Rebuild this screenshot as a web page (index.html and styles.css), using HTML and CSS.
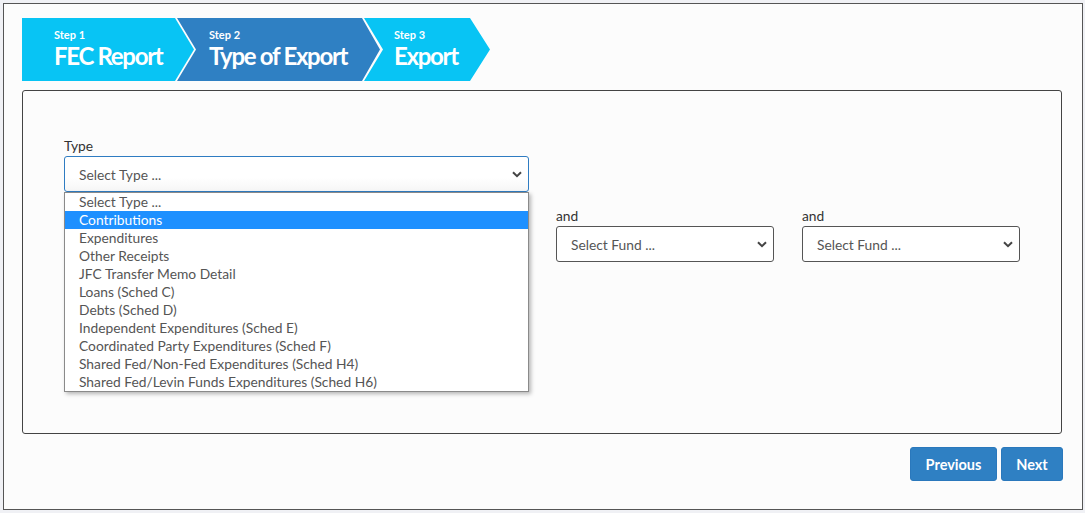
FILE: index.html
```html
<!DOCTYPE html>
<html>
<head>
<meta charset="utf-8">
<link rel="stylesheet" href="styles.css">
</head>
<body>
<div class="frame">
  <div class="steps">
    <div class="step step-first">
      <span class="step-num">Step 1</span>
      <span class="step-title">FEC Report</span>
    </div>
    <div class="step step-active">
      <span class="step-num">Step 2</span>
      <span class="step-title">Type of Export</span>
    </div>
    <div class="step step-last">
      <span class="step-num">Step 3</span>
      <span class="step-title">Export</span>
    </div>
  </div>

  <div class="panel">
    <div class="fields">
      <div class="field field-type">
        <label class="label">Type</label>
        <div class="select select-focus">
          <span>Select Type ...</span>
          <svg class="chev" width="10" height="7" viewBox="0 0 10 7"><path d="M1 1.2 L5 5.2 L9 1.2" fill="none" stroke="#444" stroke-width="2"/></svg>
        </div>
        <ul class="dropdown">
          <li>Select Type ...</li>
          <li class="hl">Contributions</li>
          <li>Expenditures</li>
          <li>Other Receipts</li>
          <li>JFC Transfer Memo Detail</li>
          <li>Loans (Sched C)</li>
          <li>Debts (Sched D)</li>
          <li>Independent Expenditures (Sched E)</li>
          <li>Coordinated Party Expenditures (Sched F)</li>
          <li>Shared Fed/Non-Fed Expenditures (Sched H4)</li>
          <li>Shared Fed/Levin Funds Expenditures (Sched H6)</li>
        </ul>
      </div>
      <div class="field field-and1">
        <label class="label">and</label>
        <div class="select">
          <span>Select Fund ...</span>
          <svg class="chev" width="10" height="7" viewBox="0 0 10 7"><path d="M1 1.2 L5 5.2 L9 1.2" fill="none" stroke="#444" stroke-width="2"/></svg>
        </div>
      </div>
      <div class="field field-and2">
        <label class="label">and</label>
        <div class="select">
          <span>Select Fund ...</span>
          <svg class="chev" width="10" height="7" viewBox="0 0 10 7"><path d="M1 1.2 L5 5.2 L9 1.2" fill="none" stroke="#444" stroke-width="2"/></svg>
        </div>
      </div>
    </div>
  </div>

  <div class="actions">
    <button class="btn btn-prev">Previous</button>
    <button class="btn btn-next">Next</button>
  </div>
</div>
</body>
</html>
```
FILE: styles.css
```css
* { box-sizing: border-box; }
html, body {
  margin: 0;
  padding: 0;
  background: #f0f1f5;
  font-family: Lato, "Open Sans", sans-serif;
}
body { padding: 3px; }
.frame {
  width: 1080px;
  height: 507px;
  border: 1px solid #555;
  background: #fcfcfc;
  padding: 14px 20px 0 18px;
  display: flex;
  flex-direction: column;
}

/* steps */
.steps {
  display: flex;
  height: 63px;
}
.step {
  display: flex;
  flex-direction: column;
  color: #fff;
  padding-left: 32px;
  padding-top: 10px;
  font-weight: 700;
}
.step-first {
  width: 172px;
  background: #08c4f4;
  clip-path: polygon(0 0, 153px 0, 100% 50%, 153px 100%, 0 100%);
}
.step-active {
  width: 203px;
  margin-left: -17px;
  background: #2f80c3;
  clip-path: polygon(0 0, 185px 0, 100% 50%, 185px 100%, 0 100%, 19px 50%);
}
.step-last {
  width: 126px;
  margin-left: -16px;
  padding-left: 30px;
  background: #08c4f4;
  clip-path: polygon(0 0, 106px 0, 100% 50%, 106px 100%, 0 100%, 19px 50%);
}
.step-num {
  font-size: 11px;
  line-height: 13px;
}
.step-title {
  font-size: 24px;
  line-height: 28px;
  letter-spacing: -1.3px;
  margin-top: 1px;
}

/* panel */
.panel {
  margin-top: 9px;
  width: 1040px;
  height: 344px;
  border: 1px solid #444;
  border-radius: 3px;
  padding: 46px 40px 0 41px;
}
.fields {
  display: grid;
  grid-template-columns: 464px 218px 218px;
  column-gap: 28px;
  row-gap: 15px;
}
.field { position: relative; }
.field-type { grid-column: 1; grid-row: 1; width: 465px; }
.field-and1 { grid-column: 2; grid-row: 2; }
.field-and2 { grid-column: 3; grid-row: 2; }
.label {
  display: block;
  font-size: 13.8px;
  line-height: 18px;
  color: #333;
  margin-bottom: 1px;
}
.select {
  height: 36px;
  border: 1px solid #555;
  border-radius: 3px;
  background: #fff;
  display: flex;
  align-items: center;
  justify-content: space-between;
  padding: 0 6px 0 14px;
  font-size: 13.8px;
  color: #555;
}
.select-focus {
  border-color: #2f7cc2;
  background: linear-gradient(#fff 60%, #f6f6f6);
}
.chev { margin-top: 1px; }

/* dropdown */
.dropdown {
  position: absolute;
  left: 0;
  top: 55px;
  width: 465px;
  margin: 0;
  padding: 0;
  list-style: none;
  background: #fff;
  border: 1px solid #8a8a8a;
  box-shadow: 2px 2px 4px rgba(0,0,0,0.28);
  z-index: 5;
}
.dropdown li {
  height: 18px;
  line-height: 18px;
  font-size: 13.8px;
  color: #555;
  padding-left: 14px;
}
.dropdown li.hl {
  background: #1e90ff;
  color: #fff;
}

/* actions */
.actions {
  display: flex;
  justify-content: flex-end;
  gap: 4px;
  margin-top: 13px;
  margin-right: -1px;
}
.btn {
  height: 34px;
  border: 1px solid #2a78bc;
  border-radius: 3px;
  background: #2f80c3;
  color: #fff;
  font-family: Lato, sans-serif;
  font-weight: 700;
  font-size: 14.5px;
  padding: 0;
}
.btn-prev { width: 87px; }
.btn-next { width: 62px; }
```
